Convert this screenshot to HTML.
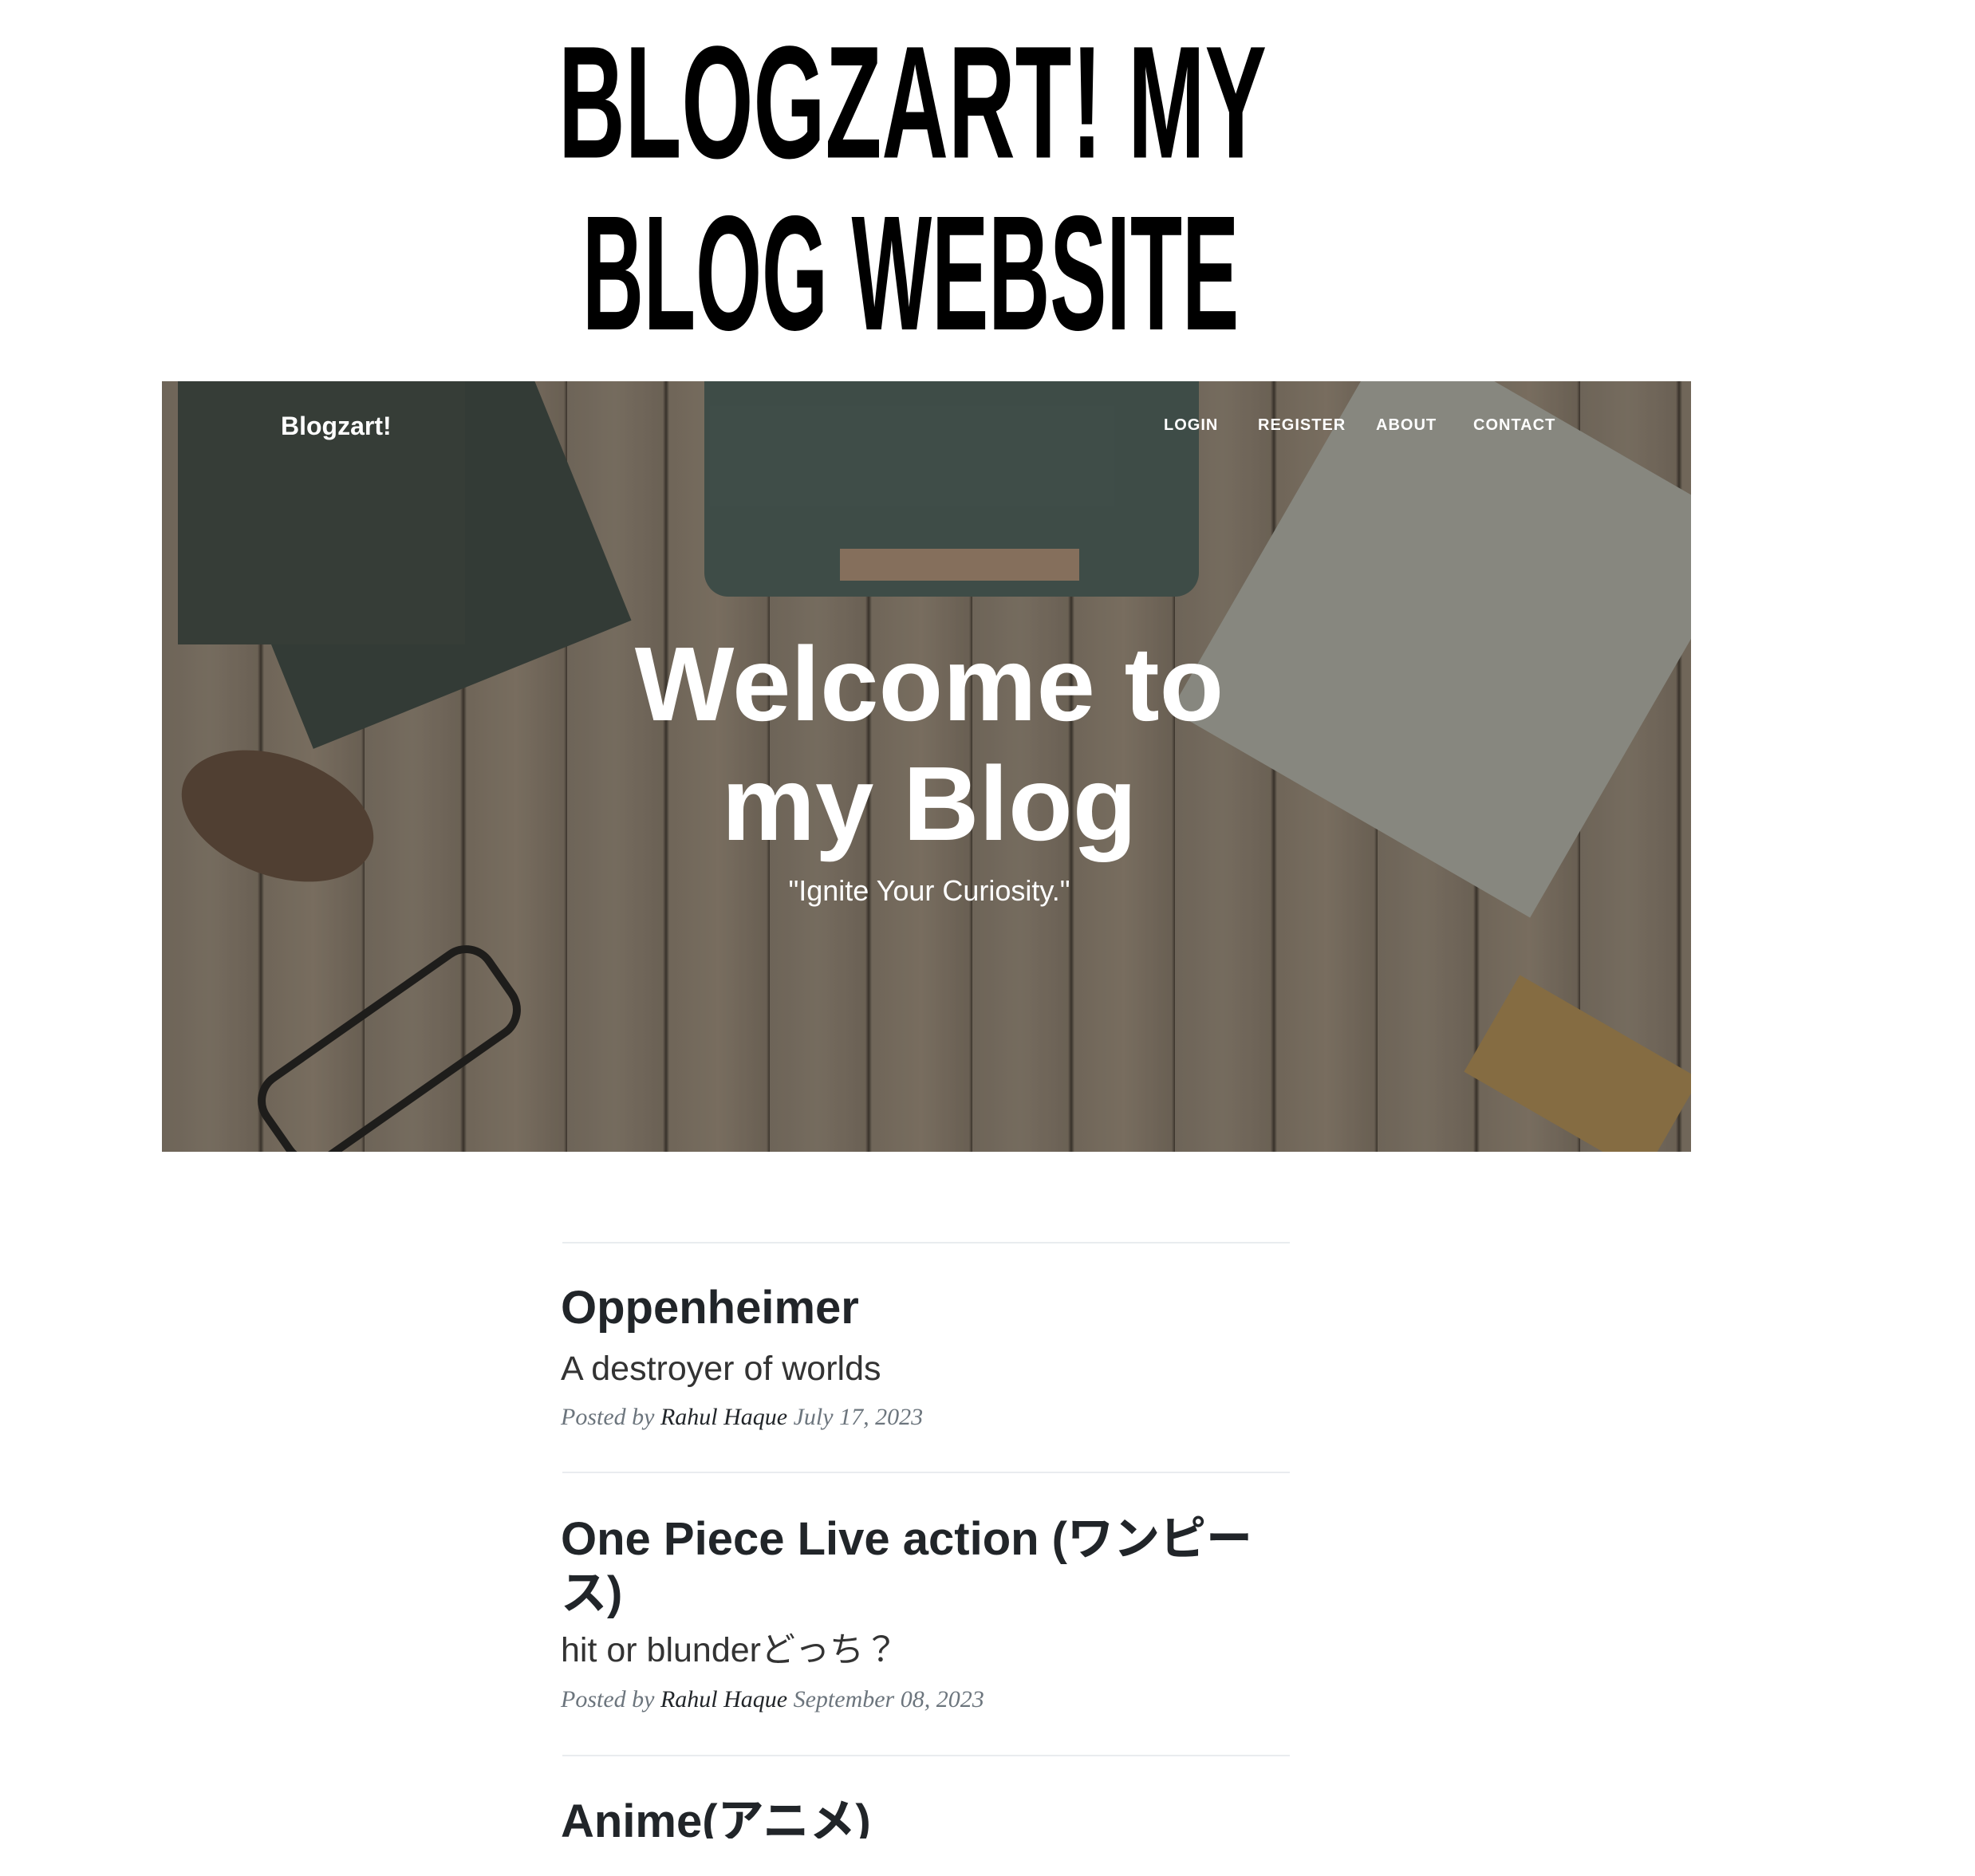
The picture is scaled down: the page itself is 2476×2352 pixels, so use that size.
<!DOCTYPE html>
<html><head><meta charset="utf-8">
<style>
html,body{margin:0;padding:0;background:#fff;}
body{width:2476px;height:2352px;position:relative;overflow:hidden;font-family:"Liberation Sans","Noto Sans CJK JP",sans-serif;}
.t{position:absolute;white-space:nowrap;}
.ttl{font-family:"Liberation Sans Narrow","Liberation Sans",sans-serif;font-weight:bold;color:#000;font-size:205px;line-height:1;transform-origin:0 0;}
#hero{position:absolute;left:203px;top:478px;width:1917px;height:966px;overflow:hidden;
background:repeating-linear-gradient(90deg,#7d7263 0px,#877b6b 60px,#7a6e5f 120px,#3c342b 124px,#807464 128px,#8a7d6c 190px,#786c5d 250px,#3e362c 254px);}
#hero .ov{position:absolute;inset:0;background:rgba(40,40,40,0.18);}
.nav{position:absolute;top:522px;color:#fff;font-weight:bold;font-size:20px;letter-spacing:1px;}
.hr{position:absolute;left:705px;width:912px;height:2px;background:#e9ecef;}
.pt{position:absolute;left:703px;font-weight:bold;color:#212529;font-size:58px;line-height:68px;white-space:nowrap;}
.ps{position:absolute;left:703px;color:#333;font-size:43px;line-height:50px;white-space:nowrap;}
.pm{position:absolute;left:703px;font-family:"Liberation Serif",serif;font-style:italic;color:#6c757d;font-size:30px;line-height:36px;white-space:nowrap;}
.pm b{font-weight:normal;color:#212529;}
</style></head><body>
<div class="t ttl" style="left:700px;top:28px;transform:scale(0.565,0.98);">BLOGZART! MY</div>
<div class="t ttl" style="left:730px;top:240px;transform:scale(0.52,1.0);">BLOG WEBSITE</div>

<div id="hero">
 <div style="position:absolute;left:40px;top:90px;width:430px;height:400px;background:#36403a;transform:rotate(-22deg);transform-origin:0 0;"></div>
 <div style="position:absolute;left:20px;top:0;width:360px;height:330px;background:#3a433b;"></div>
 <div style="position:absolute;left:680px;top:0;width:620px;height:270px;background:#44554f;border-radius:0 0 30px 30px;"></div>
 <div style="position:absolute;left:850px;top:210px;width:300px;height:40px;background:#9a7f68;"></div>
 <div style="position:absolute;left:1370px;top:20px;width:520px;height:560px;background:#9d9d93;transform:rotate(30deg);transform-origin:50% 50%;"></div>
 <div style="position:absolute;left:20px;top:470px;width:250px;height:150px;background:#5a4535;border-radius:50%;transform:rotate(20deg);"></div>
 <div style="position:absolute;left:110px;top:780px;width:330px;height:110px;border:10px solid #1d1b19;border-radius:40px;transform:rotate(-35deg);"></div>
 <div style="position:absolute;left:1650px;top:800px;width:260px;height:140px;background:#9a7c48;transform:rotate(30deg);"></div>
 <div class="ov"></div>
</div>
<div class="t" style="left:352px;top:516px;color:#fff;font-weight:bold;font-size:32px;">Blogzart!</div>
<div class="nav" style="left:1459px;">LOGIN</div>
<div class="nav" style="left:1577px;">REGISTER</div>
<div class="nav" style="left:1725px;">ABOUT</div>
<div class="nav" style="left:1847px;">CONTACT</div>
<div class="t" style="left:0;width:2330px;text-align:center;top:783px;color:#fff;font-weight:bold;font-size:132px;line-height:150px;">Welcome to<br>my Blog</div>
<div class="t" style="left:0;width:2330px;text-align:center;top:1096px;color:#fff;font-size:36px;">"Ignite Your Curiosity."</div>

<div class="hr" style="top:1557px;"></div>
<div class="pt" style="top:1606px;">Oppenheimer</div>
<div class="ps" style="top:1691px;">A destroyer of worlds</div>
<div class="pm" style="top:1759px;">Posted by <b>Rahul Haque</b> July 17, 2023</div>
<div class="hr" style="top:1845px;"></div>
<div class="pt" style="top:1896px;">One Piece Live action (ワンピー<br>ス)</div>
<div class="ps" style="top:2044px;">hit or blunderどっち？</div>
<div class="pm" style="top:2113px;">Posted by <b>Rahul Haque</b> September 08, 2023</div>
<div class="hr" style="top:2200px;"></div>
<div style="position:absolute;left:0;top:0;width:2476px;height:2305px;overflow:hidden;">
<div class="pt" style="top:2250px;">Anime(アニメ)</div>
</div>
</body></html>
